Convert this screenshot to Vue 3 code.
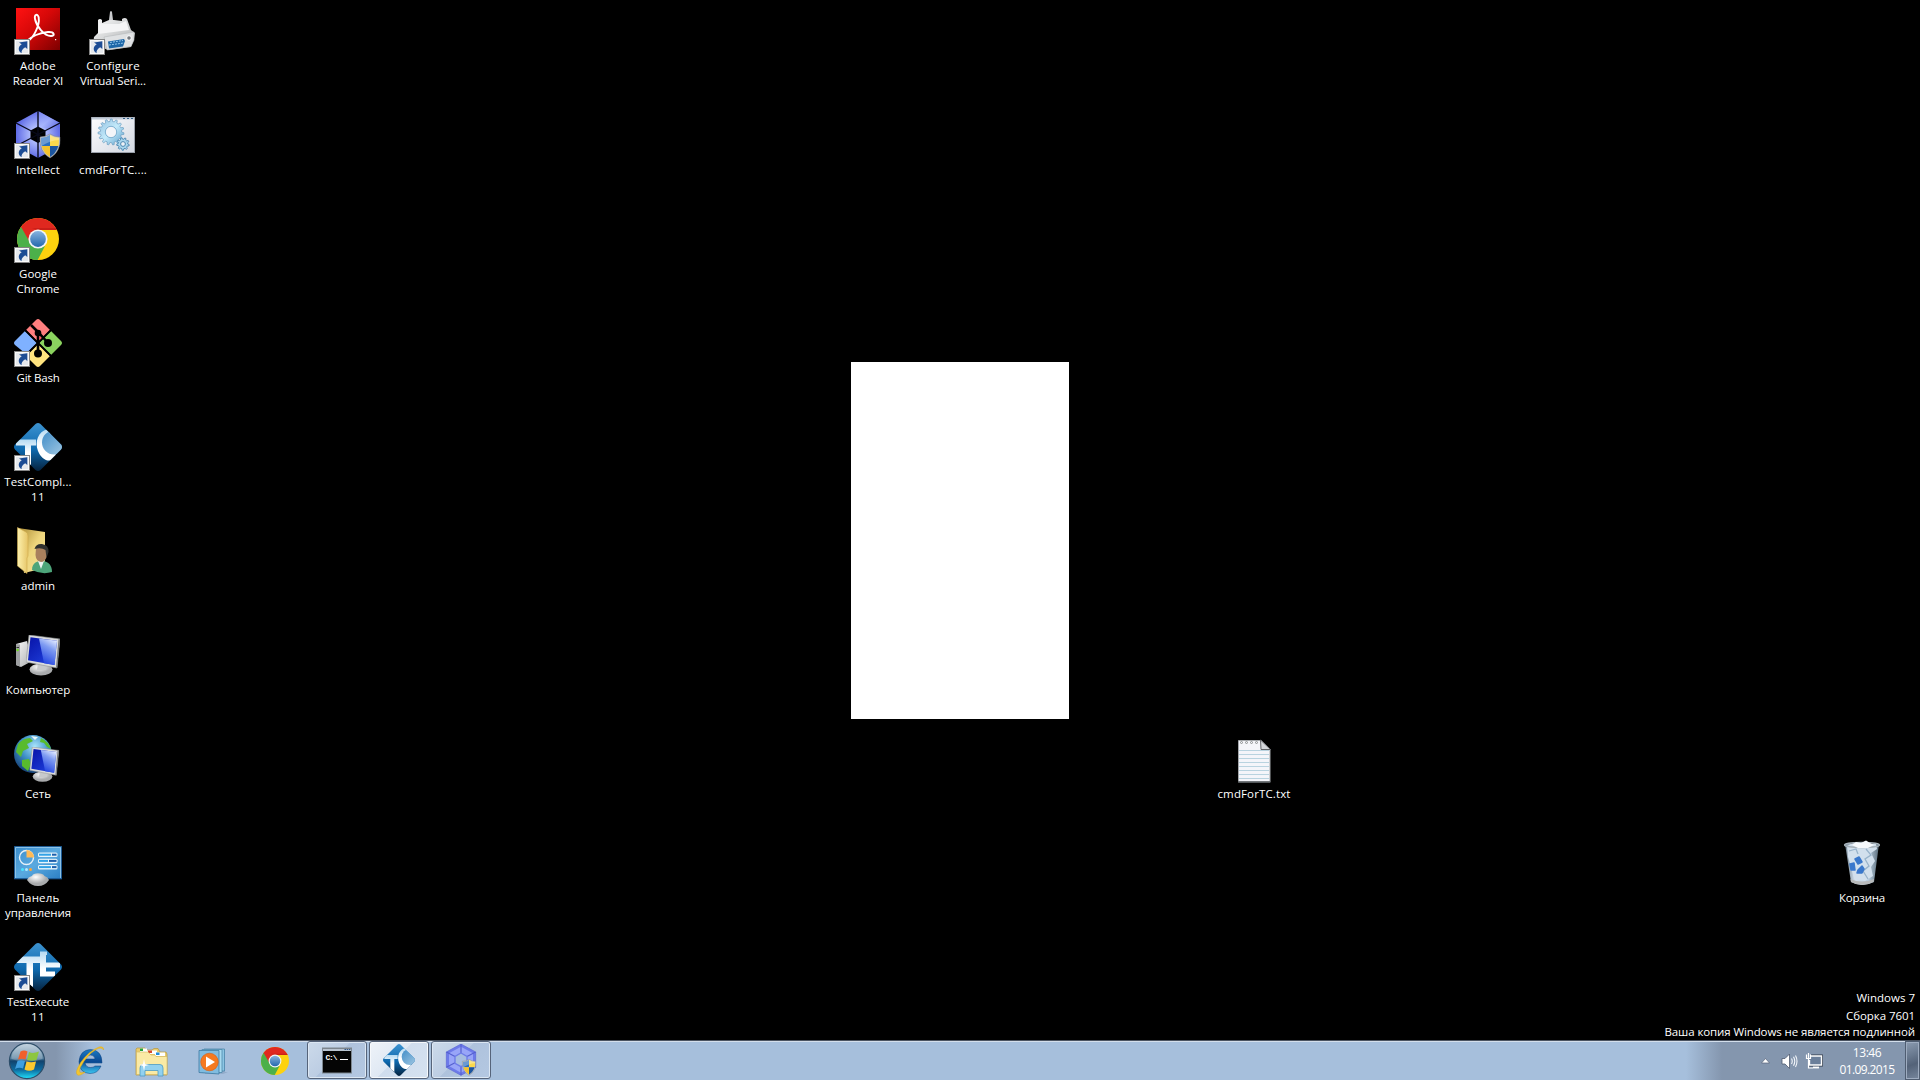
<script setup>
const columns = [
  [
    { icon: 'adobe', link: true, lines: [['Adobe', 36], ['Reader XI', 50.5]] },
    { icon: 'intellect', link: true, lines: [['Intellect', 44]] },
    { icon: 'chrome', link: true, lines: [['Google', 38], ['Chrome', 43]] },
    { icon: 'git', link: true, lines: [['Git Bash', 43]] },
    { icon: 'testcomplete', link: true, lines: [['TestCompl...', 67.5], ['11', 14]] },
    { icon: 'user', lines: [['admin', 34]] },
    { icon: 'computer', lines: [['Компьютер', 64.5]] },
    { icon: 'network', lines: [['Сеть', 26]] },
    { icon: 'panel', lines: [['Панель', 43], ['управления', 66]] },
    { icon: 'testexecute', link: true, lines: [['TestExecute', 62], ['11', 14]] },
  ],
  [
    { icon: 'serial', link: true, lines: [['Configure', 53.5], ['Virtual Seri...', 66]] },
    { icon: 'script', lines: [['cmdForTC....', 68]] },
  ],
]
const loose = [
  { icon: 'text', cls: 'at-text', lines: [['cmdForTC.txt', 73]] },
  { icon: 'bin', cls: 'at-bin', lines: [['Корзина', 46]] },
]

/* Teeth of a cog wheel as a closed polygon */
function gear(cx, cy, outer, inner, n) {
  const pts = []
  for (let i = 0; i < n; i++) {
    const a = (i / n) * Math.PI * 2
    const s = (Math.PI * 2) / n
    for (const [r, o] of [[inner, 0], [outer, 0.16], [outer, 0.46], [inner, 0.62]]) {
      pts.push(`${(cx + r * Math.cos(a + s * o)).toFixed(2)},${(cy + r * Math.sin(a + s * o)).toFixed(2)}`)
    }
  }
  return pts.join(' ')
}
const bigGear = gear(22, 21, 13, 10.6, 15)
const smallGear = gear(34, 33, 6.3, 4.8, 9)

/* Tracks a line of text so that it fills the given width */
const vFit = {
  mounted(el, { value }) {
    const gap = (value - el.getBoundingClientRect().width) / el.textContent.length
    el.style.letterSpacing = `${gap.toFixed(3)}px`
  },
}
</script>

<template>
  <div class="screen">
    <svg class="defs" width="0" height="0" aria-hidden="true">
      <defs>
        <linearGradient id="gRed" x1="0" y1="0" x2="1" y2="1"><stop offset="0" stop-color="#ff1212" /><stop offset=".45" stop-color="#d60808" /><stop offset="1" stop-color="#7c0000" /></linearGradient>
        <linearGradient id="gHex" x1="0" y1="0" x2="1" y2="1"><stop offset="0" stop-color="#7f8cf4" /><stop offset=".5" stop-color="#a9b8ff" /><stop offset="1" stop-color="#5560d8" /></linearGradient>
        <radialGradient id="gHexR"><stop offset=".25" stop-color="#b9c6ff" /><stop offset="1" stop-color="#5f6be6" /></radialGradient>
        <linearGradient id="gDia" x1="0" y1="0" x2="0" y2="1"><stop offset="0" stop-color="#3d93d0" /><stop offset=".55" stop-color="#0e69ae" /><stop offset="1" stop-color="#06233f" /></linearGradient>
        <linearGradient id="gWhite" x1="0" y1="0" x2="0" y2="1"><stop offset="0" stop-color="#b5daf2" /><stop offset=".5" stop-color="#fff" /></linearGradient>
        <linearGradient id="gMoon" x1="0" y1="0" x2="1" y2="1"><stop offset="0" stop-color="#3f8cc7" /><stop offset="1" stop-color="#a6cbe4" /></linearGradient>
        <linearGradient id="gFold" x1="0" y1="0" x2="1" y2="0"><stop offset="0" stop-color="#fdf1ae" /><stop offset="1" stop-color="#e6c567" /></linearGradient>
        <linearGradient id="gFold2" x1="0" y1="0" x2="1" y2="1"><stop offset="0" stop-color="#a98931" /><stop offset=".5" stop-color="#eed57c" /><stop offset="1" stop-color="#f6e39a" /></linearGradient>
        <linearGradient id="gScr" x1="0" y1="0" x2="1" y2="1"><stop offset="0" stop-color="#0713a8" /><stop offset="1" stop-color="#2347e4" /></linearGradient>
        <linearGradient id="gScrL" x1=".7" y1="0" x2=".3" y2="1"><stop offset="0" stop-color="#dfe8ff" /><stop offset=".35" stop-color="#7f9cf2" /><stop offset="1" stop-color="#1d3fe0" /></linearGradient>
        <linearGradient id="gSilver" x1="0" y1="0" x2="1" y2="1"><stop offset="0" stop-color="#fafafa" /><stop offset="1" stop-color="#a9acae" /></linearGradient>
        <radialGradient id="gStand" cx=".4" cy=".3"><stop offset="0" stop-color="#fff" /><stop offset="1" stop-color="#a9abad" /></radialGradient>
        <radialGradient id="gGlobe" cx=".55" cy=".3" r=".75"><stop offset="0" stop-color="#a8e4fb" /><stop offset=".5" stop-color="#3d8fc6" /><stop offset="1" stop-color="#12396f" /></radialGradient>
        <linearGradient id="gPanel" x1="0" y1="0" x2="1" y2="1"><stop offset="0" stop-color="#3a8dcc" /><stop offset=".5" stop-color="#5aa9df" /><stop offset="1" stop-color="#2c7fc4" /></linearGradient>
        <linearGradient id="gWin" x1="0" y1="0" x2="1" y2="1"><stop offset="0" stop-color="#fdfdfe" /><stop offset="1" stop-color="#d3d8e2" /></linearGradient>
        <linearGradient id="gGear" x1="0" y1="0" x2="1" y2="1"><stop offset="0" stop-color="#93bfe0" /><stop offset=".5" stop-color="#c3eafa" /><stop offset="1" stop-color="#5d9fcb" /></linearGradient>
        <linearGradient id="gBlueC" x1="0" y1="0" x2="0" y2="1"><stop offset="0" stop-color="#87b2de" /><stop offset="1" stop-color="#2468ad" /></linearGradient>
        <linearGradient id="gOrb" x1="0" y1="0" x2="0" y2="1"><stop offset="0" stop-color="#b4c8d8" /><stop offset=".42" stop-color="#5b83a0" /><stop offset=".5" stop-color="#11436d" /><stop offset=".75" stop-color="#0d6ba0" /><stop offset="1" stop-color="#21e1fb" /></linearGradient>
        <linearGradient id="gIe" x1="0" y1="0" x2="0" y2="1"><stop offset="0" stop-color="#1b7ac4" /><stop offset=".5" stop-color="#0a4a94" /><stop offset="1" stop-color="#3cc6f2" /></linearGradient>
        <linearGradient id="gBin" x1="0" y1="0" x2="1" y2="0"><stop offset="0" stop-color="#6d7f8d" /><stop offset=".3" stop-color="#d6e3ef" /><stop offset=".7" stop-color="#b6cbdd" /><stop offset="1" stop-color="#586a78" /></linearGradient>
        <clipPath id="cChrome"><circle cx="24" cy="24" r="21" /></clipPath>
        <clipPath id="cDia"><path d="M21.500 1Q24 -1 26.500 1L47 21.500Q49 24 47 26.500L26.500 47Q24 49 21.500 47L1 26.500Q-1 24 1 21.500Z" /></clipPath>
        <clipPath id="cShield"><path d="M36 24Q40 27 45 27Q46 40 36 46Q26 40 27 27Q32 27 36 24Z" /></clipPath>
      </defs>

      <symbol id="i-link" viewBox="0 0 48 48">
        <rect x=".5" y="32.500" width="15" height="15" fill="#e6e9ed" stroke="#858585" />
        <rect x="1.500" y="33.500" width="13" height="13" fill="none" stroke="#fafafa" />
        <path d="M5 35.500L13.300 34.300V42L11.200 40.300C8.500 42 7.200 44 7.600 46.300C3.800 44 3.800 39.500 7.700 37.300Z" fill="#1c4c94" />
      </symbol>

      <symbol id="i-adobe" viewBox="0 0 48 48">
        <rect x="2" y="1" width="44" height="42" fill="url(#gRed)" />
        <path d="M14 34C19 31 26 19 24.700 10.500C24 6.500 20 7 21 12C22.300 19 30 29 37 29C41.500 29 40.500 24.500 34 25C26 25.500 17 29.500 13 34" fill="none" stroke="#fff" stroke-width="1.900" stroke-linecap="round" stroke-linejoin="round" />
        <rect x="41" y="32" width="1.200" height="1.200" fill="#fff" />
      </symbol>

      <symbol id="i-serial" viewBox="0 0 48 48">
        <path d="M21 5Q22 3 23 5L24 13H20Z" fill="#c9cbcd" />
        <path d="M9 13Q11 11 13 13V16L20 13L25 13L33 14V12Q36 10 38 12L42 23L46 26L45 32L42 40L20 43L4 38L5 30L9 26Z" fill="url(#gSilver)" />
        <path d="M10 16L9 27L40 23L37 14L30 17H15Z" fill="#f4f4f5" />
        <path d="M15 30L45 25L45 33L42 39.500L18 43Z" fill="#dfe1e3" stroke="#b5b8bb" stroke-width=".6" />
        <path d="M19 34.500L35 32L36 34L34 39.500L20 41.500Z" fill="#1d67a8" />
        <path d="M21 35.500L34 33.500M20 38L35 36" stroke="#8fc1e8" stroke-width="1" stroke-dasharray="2 1" />
        <circle cx="40" cy="31" r="2.300" fill="#777b80" stroke="#fff" />
      </symbol>

      <symbol id="i-shield" viewBox="0 0 48 48">
        <path d="M36 23Q40.500 26 46 26Q47 41 36 47Q25 41 26 26Q31.500 26 36 23Z" fill="#c3c6c9" stroke="#77797c" stroke-width=".5" />
        <g clip-path="url(#cShield)">
          <path d="M26 23H36V35H26Z" fill="#2a6fc0" /><path d="M36 23H46V35H36Z" fill="#fbd84c" />
          <path d="M26 35H36V47H26Z" fill="#f4c22e" /><path d="M36 35H46V47H36Z" fill="#1c559f" />
          <path d="M26 24H46V29Q36 29 26 36Z" fill="#fff" opacity=".3" />
        </g>
      </symbol>

      <symbol id="i-intellect" viewBox="0 0 48 48">
        <path d="M24 0L46 12V35L24 47L2 35V12Z" fill="url(#gHexR)" />
        <path d="M24 0L46 12L33 18L24 15Z" fill="url(#gHex)" opacity=".7" />
        <path d="M24 15.500L31.500 19.500V28L24 32L16.500 28V19.500Z" fill="#000" />
        <path d="M24 0V47M2 12L46 35M46 12L2 35" stroke="#080a1c" stroke-width="1.400" />
        <use href="#i-shield" width="48" height="48" />
      </symbol>

      <symbol id="i-intellect-soft" viewBox="0 0 48 48">
        <path d="M24 0L46 12V35L24 47L2 35V12Z" fill="#6d7aea" stroke="#5965d4" />
        <path d="M24 4L42 14V33L24 43L6 33V14Z" fill="#98a5f8" />
        <path d="M24 0V47M2 12L46 35M46 12L2 35" stroke="#5560cf" stroke-width="1.800" />
        <path d="M24 13.500L33 18.500V29L24 34L15 29V18.500Z" fill="#a6bde0" stroke="#6e7ce8" stroke-width="2" />
        <use href="#i-shield" width="48" height="48" />
      </symbol>

      <symbol id="i-script" viewBox="0 0 48 48">
        <rect x="2.500" y="6.500" width="43" height="35" fill="url(#gWin)" stroke="#9aa0aa" />
        <path d="M3 7.500H45" stroke="#c2cbd8" stroke-width="2" />
        <path d="M34 7.500H44" stroke="#325f86" stroke-width="1.200" stroke-dasharray="2 2" />
        <polygon :points="bigGear" fill="url(#gGear)" stroke="#6a9cc0" stroke-width=".7" />
        <circle cx="22" cy="21" r="5.700" fill="#f3f5f9" stroke="#7fb1d1" />
        <polygon :points="smallGear" fill="#a9d7ee" stroke="#4c86b0" stroke-width=".9" />
        <circle cx="34" cy="33" r="2.400" fill="#eef2f7" stroke="#4c86b0" />
      </symbol>

      <symbol id="i-chrome" viewBox="0 0 48 48">
        <g clip-path="url(#cChrome)">
          <rect width="48" height="48" fill="#fdd20e" />
          <path d="M0 0H48V15H24L15 29L4 9Z" fill="#e0281f" />
          <path d="M6 10L16.500 28.500Q20 33 26 33L31 31L22 48H0V10Z" fill="#4cb04a" />
          <path d="M24 15H46V13H18Z" fill="#b31512" opacity=".5" />
        </g>
        <circle cx="24" cy="24" r="9.600" fill="#f3f5f7" />
        <circle cx="24" cy="24" r="7.900" fill="url(#gBlueC)" />
      </symbol>

      <symbol id="i-git" viewBox="0 0 48 48">
        <path d="M22 1Q24 -1 26 1L36 11L24 23L12 11Z" fill="#ff7f7f" />
        <path d="M11 12L23 24L12 35L1 26Q-1 24 1 22Z" fill="#7fb1ff" />
        <path d="M37 12L47 22Q49 24 47 26L37 36L25 24Z" fill="#8bd35f" />
        <path d="M24 25L36 37L26 47Q24 49 22 47L12 37Z" fill="#ffe47f" />
        <path d="M11 11L37 37M37 11L11 37" stroke="#000" stroke-width="1.800" />
        <path d="M17 6L24 13L34 24M24 13V34" stroke="#000" stroke-width="2.600" fill="none" />
        <circle cx="24" cy="14" r="3.300" /><circle cx="34" cy="24" r="4" /><circle cx="24" cy="34.500" r="4" />
        <circle cx="26.300" cy="19.200" r="1" fill="#ff5060" />
      </symbol>

      <symbol id="i-testcomplete" viewBox="0 0 48 48">
        <g clip-path="url(#cDia)">
          <rect width="48" height="48" fill="url(#gDia)" />
          <path d="M2 16.500H22V22.500H17V42L11 38V22.500H2Z" fill="url(#gWhite)" />
          <path d="M34 6C24 8 20.500 19 24 28C27.500 37 36 41 43 34L41 30L36 9Z" fill="url(#gWhite)" />
          <circle cx="40" cy="19.500" r="12" fill="url(#gMoon)" />
        </g>
      </symbol>

      <symbol id="i-testexecute" viewBox="0 0 48 48">
        <g clip-path="url(#cDia)">
          <rect width="48" height="48" fill="url(#gDia)" />
          <path d="M0 13.500H26V8.500H33V12H32V19.500H46V24.500H32V28.500H41V33.500H26V20H19V44L12.500 40V20H0Z" fill="url(#gWhite)" />
        </g>
      </symbol>

      <symbol id="i-user" viewBox="0 0 48 48">
        <path d="M4 1L31 5V36L27 42L10 46Z" fill="url(#gFold2)" />
        <path d="M3.500 .5L12 5Q14 6 14 9V29L13 31V46.500L3.500 39Z" fill="url(#gFold)" stroke="#cda94c" stroke-width=".6" />
        <path d="M18 43C18 35 24 34 28 34C35 34 38 39 38 45Q28 48 18 43Z" fill="#4da57a" />
        <path d="M24 34L27 42L30 34Z" fill="#eef3f2" />
        <path d="M22 21Q27 16 33 21V29Q31 35 27 35Q22 34 21.500 28Z" fill="#a9805d" />
        <path d="M20.500 22Q22 16.500 28 17Q35 18 34.500 25L32.500 31L31.500 23Q27 20 20.500 22Z" fill="#30312f" />
      </symbol>

      <symbol id="i-monitor" viewBox="0 0 34 42">
        <ellipse cx="15" cy="34.500" rx="11.500" ry="6" fill="url(#gStand)" />
        <path d="M12 27L21 29L20 35H11Z" fill="#c7c9cb" />
        <path d="M3 0L34 4L31 33L0 27Z" fill="#dadcdd" stroke="#8f9294" stroke-width=".6" />
        <path d="M4.500 2.200L31 5.800L28.500 30L2 25.300Z" fill="url(#gScr)" />
        <path d="M13 3.400L31 5.800L28.500 30L18 28.200Z" fill="url(#gScrL)" />
        <path d="M32.500 4L34 4.200L31 33L30 32.500Z" fill="#77797b" />
      </symbol>

      <symbol id="i-computer" viewBox="0 0 48 48">
        <path d="M2 13L13 10L18 30L7 36L2 34Z" fill="url(#gSilver)" />
        <path d="M2 13L6 13.500V35.500L2 34Z" fill="#9d9fa1" />
        <path d="M2.500 16.500H5" stroke="#333" /><circle cx="3.600" cy="19" r="1.200" fill="#6fdc1d" />
        <use href="#i-monitor" x="12" y="4" width="34" height="42" />
      </symbol>

      <symbol id="i-network" viewBox="0 0 48 48">
        <circle cx="19" cy="19" r="19" fill="url(#gGlobe)" />
        <path d="M4 9Q9 3 16 3L19 6L13 9L15 13L9 16L7 22L2 17ZM27 3Q35 7 37 14L33 12L30 8L26 7ZM8 25L15 24L17 29L14 36L8 31Z" fill="#58bb2d" />
        <path d="M17 1L24 2L21 5Z" fill="#e9f8fa" />
        <use href="#i-monitor" x="15.500" y="12" width="29.500" height="36" />
      </symbol>

      <symbol id="i-panel" viewBox="0 0 48 48">
        <rect x=".7" y="7.700" width="46.600" height="32" fill="url(#gPanel)" stroke="#1e5f9c" stroke-width="1.200" />
        <path d="M1.500 39V8.500H46.500V39" fill="none" stroke="#9fd0f0" stroke-width=".8" />
        <circle cx="12.500" cy="18.500" r="7" fill="none" stroke="#e7f1f8" stroke-width="1.400" />
        <path d="M12.500 18.500V11A7.500 7.500 0 0 1 20 18.500Z" fill="#ffba56" />
        <g fill="#e6f4fb"><rect x="24" y="13.500" width="19.500" height="4.500" rx="1.500" /><rect x="24" y="19.700" width="19.500" height="4.500" rx="1.500" /><rect x="24" y="25.900" width="19.500" height="4.500" rx="1.500" /></g>
        <g fill="#32a2e6"><rect x="25" y="14.700" width="12" height="2" /><rect x="25" y="20.900" width="9" height="2" /><rect x="25" y="27.100" width="12" height="2" /></g>
        <g fill="#1d5fac"><rect x="38" y="14.700" width="4.500" height="2" /><rect x="35" y="20.900" width="7.500" height="2" /><rect x="38" y="27.100" width="4.500" height="2" /></g>
        <circle cx="8.500" cy="30.500" r="1.500" fill="#49e4ff" /><circle cx="12.500" cy="30.500" r="1.500" fill="#b1ebff" /><circle cx="16.500" cy="30.500" r="1.500" fill="#ffa432" />
        <path d="M13 41Q14 38 18 37Q19 34.500 24 34.300Q29 34.500 30.500 37Q34 38 35 41Q31 47 24 47T13 41Z" fill="url(#gStand)" />
      </symbol>

      <symbol id="i-text" viewBox="0 0 48 48">
        <path d="M8.500 5.500H31L40 14V47H8.500Z" fill="#f4f5fa" stroke="#a4a7ab" />
        <path d="M8 47H40.500" stroke="#55585c" stroke-width="1.500" />
        <path d="M9 15.500H39M9 19.500H39M9 23.500H39M9 27.500H39M9 31.500H39M9 35.500H39M9 39.500H39M9 43.500H39" stroke="#b9d3e0" />
        <path d="M30.500 5L40.500 14.500H31Z" fill="#d5d7db" stroke="#606266" />
        <g fill="none" stroke="#8d9092"><circle cx="11.500" cy="7.500" r="1" /><circle cx="16.500" cy="7.500" r="1" /><circle cx="21.500" cy="7.500" r="1" /><circle cx="26.500" cy="7.500" r="1" /></g>
      </symbol>

      <symbol id="i-bin" viewBox="0 0 48 48">
        <path d="M7 5L41 5L36 43Q24 49 13 43Z" fill="url(#gBin)" />
        <path d="M9 7L17 3L22 5L28 2L32 5L38 5L39 10L33 14L37 22L33 28L35 37L27 42L16 40L13 28L10 18Z" fill="#d2e0ed" />
        <path d="M28 10L33 16L27 20L31 27L25 32L30 40M11 12L18 10L20 15" fill="none" stroke="#98b3ca" stroke-width="1.300" />
        <path d="M17 20L21 18L24 23L20 25ZM12 25L16 24L17 31L13 31ZM20 31L24 27L26 30L24 34L19 34Z" fill="#3a78cc" stroke="#3a78cc" stroke-width="1.500" stroke-linejoin="round" />
        <path d="M12.500 40Q24 45 36 40L35.500 43Q24 49 13 43Z" fill="#b8babb" />
        <ellipse cx="24" cy="6" rx="17.500" ry="2.500" fill="none" stroke="#a7b2ba" stroke-width="1.300" />
        <path d="M14 6L18 3L23 4L28 1.500L32 4L36 6L30 9H20Z" fill="#f6f9fc" />
      </symbol>
    </svg>

    <main class="desktop">
      <div class="columns">
        <div v-for="(col, c) in columns" :key="c" class="column">
          <div v-for="item in col" :key="item.icon" class="item">
            <svg class="icon" viewBox="0 0 48 48">
              <use :href="'#i-' + item.icon" />
              <use v-if="item.link" href="#i-link" />
            </svg>
            <div v-for="line in item.lines" :key="line[0]" class="line"><span v-fit="line[1]">{{ line[0] }}</span></div>
          </div>
        </div>
      </div>

      <div v-for="item in loose" :key="item.icon" class="item" :class="item.cls">
        <svg class="icon" viewBox="0 0 48 48"><use :href="'#i-' + item.icon" /></svg>
        <div v-for="line in item.lines" :key="line[0]" class="line"><span v-fit="line[1]">{{ line[0] }}</span></div>
      </div>

      <div class="splash"></div>

      <div class="watermark">
        <div><span v-fit="58.500">Windows 7</span></div>
        <div><span v-fit="69">Сборка 7601</span></div>
        <div class="tight"><span v-fit="250.500">Ваша копия Windows не является подлинной</span></div>
      </div>
    </main>

    <footer class="taskbar">
      <div class="start">
        <svg width="38" height="38" viewBox="0 0 38 38">
          <circle cx="19" cy="19" r="17.600" fill="url(#gOrb)" stroke="#2c4d69" stroke-width="1.200" />
          <path d="M3.500 17A15.500 15.500 0 0 1 34.500 17Q19 23 3.500 17Z" fill="#fff" opacity=".22" />
          <path d="M12.500 9.500Q16 7.500 19.500 9.500L17.500 17.500Q14 16 10 17.500Z" fill="#f0602b" />
          <path d="M21 10Q25 12 31 9.500L28.500 18Q24 19.500 19 18Z" fill="#8dc63f" />
          <path d="M9.500 19Q13 17.500 17 19L15 26.500Q11 25 7 27Z" fill="#3f9fe0" />
          <path d="M18.500 19.500Q23 21 28 19.500L26 27.500Q21 30 16.500 27.500Z" fill="#fdc82f" />
        </svg>
      </div>
      <div class="pinned">
        <svg width="34" height="34" viewBox="0 0 34 34">
          <path d="M30 19H13Q14 23.500 18.500 23.500Q21.500 23.500 23 22H29Q26 29.500 18 29.500Q7 29 7 17.500Q8 6 18.500 5.500Q30 6 30 19ZM13 15H23Q22.500 11 18.500 11Q14 11 13 15Z" fill="url(#gIe)" fill-rule="evenodd" stroke="#0b3f7d" stroke-width=".5" />
          <path d="M31.500 6Q32 2 27 3Q17 7 9 18Q2 29 5.500 31Q8 32 13 28Q5 31 8.500 23Q15 11 24 5.500Q30 2.500 31.500 6Z" fill="#f2c62f" stroke="#dfa81a" stroke-width=".5" />
        </svg>
      </div>
      <div class="pinned">
        <svg width="34" height="34" viewBox="0 0 34 34">
          <path d="M2 5L3 4H11L12 6H18L20 4.500H24L26 8H32L33 10V31H2Z" fill="#e8cc6e" stroke="#b8963d" stroke-width=".7" />
          <path d="M6 4.500H13V8H6Z" fill="#fff" /><rect x="6" y="4.500" width="3" height="2.500" fill="#24a33a" />
          <path d="M13 6.500H23V10H13Z" fill="#fff" /><rect x="14" y="6.500" width="4" height="2.500" fill="#d54a2d" />
          <path d="M21 8.500H31V12H21Z" fill="#fff" /><rect x="22" y="8.500" width="3.500" height="2.500" fill="#1c8dde" />
          <path d="M2.500 8H14L17 11H21L22 12.500H33V30.500H2.500Z" fill="#faeaa5" stroke="#d2b55c" stroke-width=".6" />
          <path d="M6 32V24Q6 20.500 9 20.500H26Q29 20.500 29 24V32H24V26.500H11V32Z" fill="#92d1ef" stroke="#4d9cc5" stroke-width=".8" />
          <path d="M10 15L11 20L15 21L11 22L10 27L9 22L5 21L9 20Z" fill="#fff" />
        </svg>
      </div>
      <div class="pinned">
        <svg width="34" height="34" viewBox="0 0 34 34">
          <path d="M9 6H29V28L32 28L27 30H9Z" fill="#7e9ab8" opacity=".5" />
          <path d="M8 5H28.500V27H8Z" fill="#8cc6e4" stroke="#437fa5" stroke-width=".7" />
          <path d="M6 5.500H26V28.500H6Z" fill="#a9dbf0" stroke="#437fa5" stroke-width=".7" />
          <path d="M3 6.500H23V30L3 28.500Z" fill="#80bce0" stroke="#3c7aa2" stroke-width=".8" />
          <circle cx="13.500" cy="18" r="8.800" fill="#f47920" stroke="#d95b0c" stroke-width=".6" />
          <path d="M10 12.500V23.500L19 18Z" fill="#fff" />
        </svg>
      </div>
      <div class="pinned"><svg width="32" height="32" viewBox="0 0 48 48"><use href="#i-chrome" /></svg></div>

      <div class="tasks">
        <div class="task">
          <svg width="32" height="32" viewBox="0 0 32 32">
            <rect x="1.500" y="4" width="29" height="25" fill="#050505" stroke="#7d8790" />
            <rect x="2" y="4.500" width="28" height="2.500" fill="#b9c4d0" /><path d="M23.500 5.500H29.500" stroke="#31588a" stroke-dasharray="1.500 .7" />
            <text x="4.500" y="15.500" class="prompt" textLength="12">C:\</text>
            <path d="M19 15.500H27" stroke="#fff" />
          </svg>
        </div>
        <div class="task lit"><svg width="32" height="32" viewBox="0 0 48 48"><use href="#i-testcomplete" /></svg></div>
        <div class="task"><svg width="32" height="32" viewBox="0 0 48 48"><use href="#i-intellect-soft" /></svg></div>
      </div>

      <div class="tray">
        <svg width="9" height="18" viewBox="0 0 9 18"><path d="M4.500 6.500L8.500 11H.5Z" fill="#fff" stroke="#56637a" stroke-width=".7" /></svg>
        <svg class="speaker" width="17" height="18" viewBox="0 0 17 18">
          <path d="M1 6.500H4L8.500 2V16.500L4 12H1Z" fill="#fff" stroke="#4f5b6e" stroke-width=".8" />
          <path d="M10.500 6.500Q12 9.300 10.500 12M12.500 4.800Q15 9.300 12.500 13.800M14.500 3.500Q17.500 9.300 14.500 15" fill="none" stroke="#f3f6fa" stroke-width="1.100" />
        </svg>
        <svg class="net" width="18" height="18" viewBox="0 0 18 18">
          <path d="M6 4H16.500V13H4.500V9" fill="#667a94" stroke="#2f3948" stroke-width="2.800" />
          <path d="M6 4H16.500V13H4.500V8" fill="#6b7f9a" stroke="#fff" stroke-width="1.400" />
          <path d="M8 15.500H14" stroke="#fff" stroke-width="1.800" />
          <path d="M1.500 2.500V6.500H5.500V2.500M3.500 1V16H8" fill="none" stroke="#fff" stroke-width="1.200" />
        </svg>
        <div class="clock">
          <div><span v-fit="28.500">13:46</span></div>
          <div><span v-fit="55">01.09.2015</span></div>
        </div>
        <div class="peek"></div>
      </div>
    </footer>
  </div>
</template>

<style>
html,
body {
  margin: 0;
  background: #000;
  overflow: hidden;
}
</style>

<style scoped>
.screen {
  width: 1920px;
  height: 1080px;
  display: flex;
  flex-direction: column;
  background: #000;
  color: #fff;
  font-family: 'Open Sans', 'Noto Sans', sans-serif;
  font-size: 11.5px;
  overflow: hidden;
}
.defs {
  position: absolute;
}
.desktop {
  position: relative;
  flex: 1;
}
.columns {
  display: flex;
}
.item {
  width: 75px;
  height: 97px;
  padding-top: 7px;
}
.icon {
  display: block;
  width: 48px;
  height: 48px;
  margin: 0 0 3px 14px;
}
.line {
  display: flex;
  justify-content: center;
  height: 15px;
  padding-left: 1px;
  line-height: 15px;
  white-space: nowrap;
}
.at-text {
  position: absolute;
  left: 1216px;
  top: 728px;
}
.at-bin {
  position: absolute;
  left: 1824px;
  top: 832px;
}
.splash {
  position: absolute;
  left: 851px;
  top: 362px;
  width: 218px;
  height: 357px;
  background: #fff;
}
.watermark {
  position: absolute;
  right: 5px;
  bottom: 0;
  height: 51px;
  text-align: right;
  line-height: 18px;
  white-space: nowrap;
}
.watermark .tight {
  line-height: 14px;
}
.taskbar {
  box-sizing: border-box;
  height: 40px;
  display: flex;
  align-items: stretch;
  border-top: 1px solid #4a5361;
  box-shadow: inset 0 1px 0 #d3deeb;
  background: linear-gradient(90deg, #8496ae 0, #8496ae 56px, #a6bfdc 92px, #a6bfdc 1686px, #8496ae 1722px);
}
.start {
  width: 54px;
  padding: 1px 0 0 8px;
  box-sizing: border-box;
}
.pinned {
  width: 62px;
  display: flex;
  align-items: center;
  justify-content: center;
}
.start + .pinned {
  margin-left: 4px;
}
.pinned svg,
.task svg,
.start svg {
  display: block;
}
.tasks {
  display: flex;
  gap: 2px;
  margin-left: 1px;
  padding: 0 0 1px;
}
.task {
  box-sizing: border-box;
  width: 60px;
  display: flex;
  align-items: center;
  justify-content: center;
  border: 1px solid #56647a;
  border-radius: 3px;
  background: linear-gradient(135deg, #ccdaea 0, #bccde3 45%, #aec2dc 46%, #b4c8e2 100%);
  box-shadow: inset 0 0 0 1px #dce7f3;
}
.task.lit {
  background: linear-gradient(135deg, #eef3f9 0, #dfe8f3 45%, #d0dded 46%, #d5e2f1 100%);
  box-shadow: inset 0 0 0 1px #f6f9fc;
}
.prompt {
  font-family: 'Liberation Mono', monospace;
  font-size: 8px;
  font-weight: bold;
  fill: #fff;
}
.tray {
  margin-left: auto;
  display: flex;
  align-items: center;
}
.tray > svg {
  display: block;
}
.speaker {
  margin-left: 11px;
}
.net {
  margin-left: 7px;
}
.clock {
  box-sizing: border-box;
  width: 82px;
  padding: 0 0 0 6px;
  text-align: center;
  line-height: 17px;
  font-size: 12px;
}
.peek {
  box-sizing: border-box;
  width: 15px;
  height: 39px;
  border: 1px solid #4f5d71;
  background: linear-gradient(160deg, #8b9bb0 0, #66768c 40%, #536278 60%, #77879d 100%);
  box-shadow: inset 0 0 0 1px #9eacc0;
}
</style>
